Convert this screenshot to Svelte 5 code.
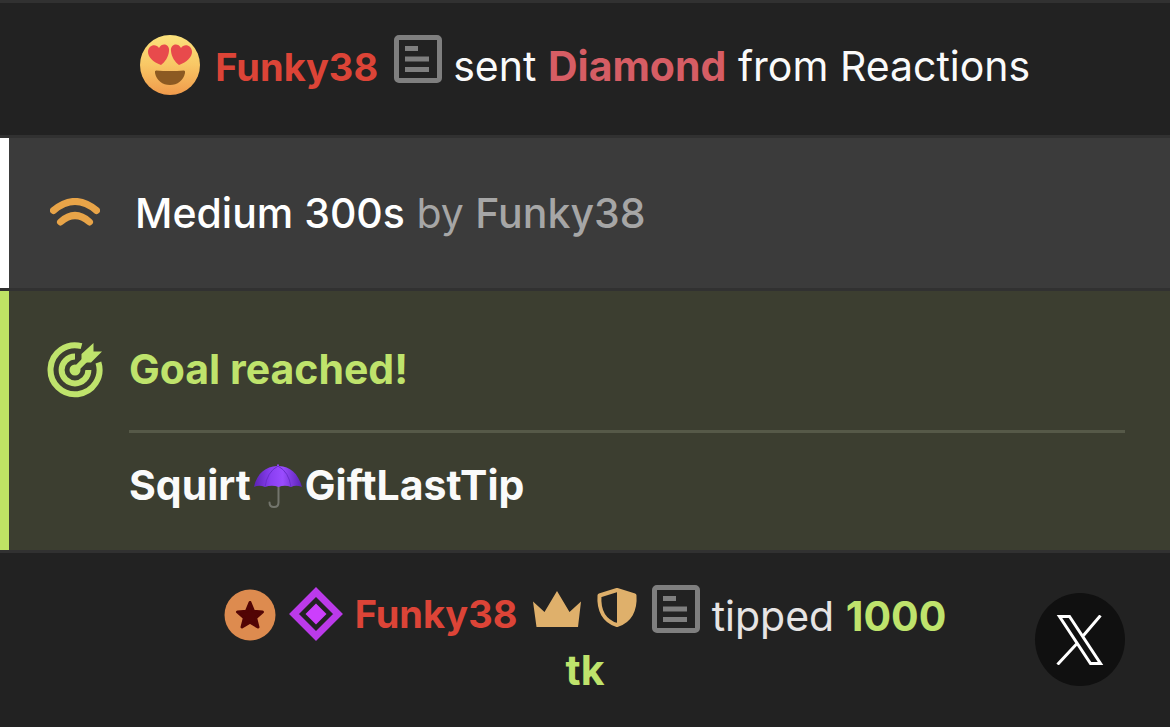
<script>
  const user = 'Funky38';
  const reaction = { name: 'Diamond', source: 'Reactions' };
  const vibe = { level: 'Medium', seconds: 300 };
  const tip = { amount: 1000, unit: 'tk' };
</script>

{#snippet noteIcon()}
  <button class="note-button" aria-label="Note about {user}">
    <svg class="icon" viewBox="0 0 48 48" aria-hidden="true">
      <rect x="2.5" y="2.5" width="43" height="43" rx="2.5" fill="none" stroke="#7f7f7f" stroke-width="5" />
      <path d="M11 11h13v5H11zM11 21.500h24v5H11zM11 32h24v5H11z" fill="#7f7f7f" />
    </svg>
  </button>
{/snippet}

<main class="feed">
  <section class="event reaction">
    <svg class="emoji" viewBox="0 0 60 60" aria-hidden="true">
      <defs>
        <linearGradient id="face" x1="0" y1="0" x2="0" y2="1">
          <stop offset="0" stop-color="#fbe27c" />
          <stop offset="0.5" stop-color="#f8c765" />
          <stop offset="1" stop-color="#f09a4b" />
        </linearGradient>
      </defs>
      <circle cx="30" cy="30" r="30" fill="url(#face)" />
      <path d="M21 30C13 27 8 22 8 17c0-7 8-9 11-4 3-6 11-4 10 3-.5 6-4 11-8 14z" fill="#e84a4c" />
      <path d="M39 30c8-3 13-8 13-13 0-7-8-9-11-4-3-6-11-4-10 3 .5 6 4 11 8 14z" fill="#e84a4c" />
      <path d="M16 35.500Q30 36.500 44 35.500Q45.500 35.500 45 38C43.500 45.500 37.500 50 30 50S16.500 45.500 15 38Q14.500 35.500 16 35.500z" fill="#8c5a22" />
    </svg>
    <span class="user">{user}</span>
    {@render noteIcon()}
    <span class="sent">sent <b>{reaction.name}</b> from {reaction.source}</span>
  </section>

  <section class="event vibe">
    <svg class="wave" viewBox="0 0 50 30" aria-hidden="true">
      <path d="M3.500 12.500Q25 -5.500 46.500 12.500M10.500 24Q25 11 39.500 24" />
    </svg>
    <p>
      <span class="level">{vibe.level} {vibe.seconds}s</span>
      by <span class="by-user">{user}</span>
    </p>
  </section>

  <section class="event goal">
    <svg class="target" viewBox="0 0 56 56" aria-hidden="true">
      <path class="ring" d="M34.500 4.200A24.500 24.500 0 1 0 51.400 20.500" />
      <path class="ring" d="M28 14.600A13.400 13.400 0 1 0 41.400 28" />
      <path class="shaft" d="M28 28L39 17" />
      <circle cx="28" cy="28" r="5.500" />
      <path d="M34.500 18.500V12L46.500 1V9.500H55L44 20.500H37z" />
    </svg>
    <div class="goal-body">
      <h2>Goal reached!</h2>
      <p class="goal-text">
        Squirt<svg class="umbrella" viewBox="0 0 54 48" aria-hidden="true">
          <defs>
            <linearGradient id="canopy" x1="0" y1="0" x2="1" y2="0">
              <stop offset="0" stop-color="#5b23b5" />
              <stop offset="0.35" stop-color="#8a3ff2" />
              <stop offset="0.6" stop-color="#9a4cff" />
              <stop offset="1" stop-color="#5a22b4" />
            </linearGradient>
          </defs>
          <path d="M27.500 20V38.500Q27.500 43 23 43T18.500 38.500" fill="none" stroke="#73756c" stroke-width="2" stroke-linecap="round" />
          <path d="M3 23C6 9 15 2.500 26 2V0.500H28V2C39 2.500 47 9 51 23Q45 20.500 40 23Q34 20.500 27.500 23Q21 20.500 14 23Q8 20.500 3 23z" fill="url(#canopy)" />
          <path d="M27 2Q16 8 14 23M27 2Q38 8 40 23" fill="none" stroke="#6a2ccb" stroke-width="1" />
        </svg>GiftLastTip
      </p>
    </div>
  </section>

  <section class="event tip">
    <svg class="badge star" viewBox="0 0 52 52" aria-hidden="true">
      <circle cx="26" cy="26" r="25.500" fill="#dd8b4f" />
      <path d="M26 13.500L29.600 22.300L38.500 23L31.700 29L34 38L26 33.300L18 38L20.300 29L13.500 23L22.400 22.300z" fill="#520505" stroke="#520505" stroke-width="3" stroke-linejoin="round" />
    </svg>
    <svg class="badge diamond" viewBox="0 0 54 54" aria-hidden="true">
      <path d="M27 5L49 27L27 49L5 27z" fill="none" stroke="#bb3aea" stroke-width="7" />
      <path d="M27 16.500L37.500 27L27 37.500L16.500 27z" fill="#cc3ffc" />
    </svg>
    <span class="user">{user}</span>
    <svg class="icon" viewBox="0 0 48 48" aria-hidden="true">
      <path d="M0 16.500L11.500 27L24 6L36.500 27L48 16.500L45 42H3.500z" fill="#dfb06b" />
    </svg>
    <svg class="icon" viewBox="0 0 48 48" aria-hidden="true">
      <path d="M24 5L41.500 10.500C42.500 25 37 36 24 40C11 36 5.500 25 6.500 10.500z" fill="none" stroke="#dfb06b" stroke-width="4" stroke-linejoin="round" />
      <path d="M24 4L42 10C43 26 37 36 24 41z" fill="#dfb06b" />
    </svg>
    {@render noteIcon()}
    <span class="tipped">tipped <b>{tip.amount}</b> <b>{tip.unit}</b></span>

    <button class="share" aria-label="X">
      <svg viewBox="0 0 48 50" aria-hidden="true">
        <path d="M3.500 1.500H13.500L44.500 48.500H34.500zM44.500 0.500L27 21M21.500 28L1.500 49.500" />
      </svg>
    </button>
  </section>
</main>

<style>
  :global(body) {
    margin: 0;
    background: #222222;
  }

  .feed {
    font-family: Inter, "Liberation Sans", sans-serif;
    font-size: 41px;
    line-height: 54px;
    color: #fafafa;
    background: #222222;
  }

  .event {
    border-top: 3px solid #313131;
  }

  h2,
  p {
    margin: 0;
  }

  .reaction,
  .tip {
    text-align: center;
  }

  .reaction {
    padding: 32px 40px 40px;
  }

  .emoji {
    width: 60px;
    height: 60px;
    margin-right: 4px;
    vertical-align: -14px;
  }

  .user {
    margin-right: 4px;
    font-size: 38px;
    font-weight: 700;
    color: #dc4437;
  }

  .note-button {
    padding: 0;
    border: 0;
    background: none;
    font: inherit;
    cursor: pointer;
  }

  .icon {
    width: 48px;
    height: 48px;
    vertical-align: -2px;
  }

  .sent b {
    color: #d65d64;
  }

  .vibe {
    display: flex;
    align-items: center;
    gap: 35px;
    padding: 48px 50px;
    box-shadow: inset 9px 0 #ffffff;
    background: #3b3b3b;
    color: #a6a6a6;
  }

  .wave {
    width: 50px;
    height: 30px;
    fill: none;
    stroke: #e8a448;
    stroke-width: 7;
    stroke-linecap: round;
  }

  .level {
    font-weight: 500;
    color: #ffffff;
  }

  .by-user {
    font-weight: 500;
  }

  .goal {
    display: flex;
    gap: 26px;
    padding: 51px 45px 38px 47px;
    box-shadow: inset 9px 0 #bfe364;
    background: #3c3e30;
  }

  .target {
    flex: none;
    width: 56px;
    height: 56px;
    fill: #bfe36c;
  }

  .ring,
  .shaft {
    fill: none;
    stroke: #bfe36c;
    stroke-width: 6;
  }

  .goal-body {
    flex: 1;
  }

  h2 {
    padding-bottom: 34px;
    border-bottom: 3px solid #565948;
    font-size: 41px;
    font-weight: 700;
    color: #bfe36c;
  }

  .goal-text {
    padding-top: 25px;
    font-weight: 700;
  }

  .umbrella {
    width: 54px;
    height: 48px;
    vertical-align: -12px;
  }

  .tip {
    position: relative;
    padding: 32px 205px 24px;
  }

  .tip .user {
    vertical-align: 3px;
  }

  .badge {
    width: 52px;
    height: 52px;
    vertical-align: -10px;
  }

  .star {
    margin-right: 2px;
  }

  .diamond {
    width: 54px;
    height: 54px;
  }

  .tipped {
    color: #e6e4e4;
  }

  .tipped b {
    color: #bfe36c;
  }

  .share {
    position: absolute;
    top: 40px;
    right: 45px;
    display: flex;
    align-items: center;
    justify-content: center;
    width: 90px;
    height: 93px;
    padding: 0;
    border: 0;
    border-radius: 50%;
    background: #101010;
    cursor: pointer;
  }

  .share svg {
    width: 48px;
    height: 50px;
    fill: none;
    stroke: #ffffff;
    stroke-width: 3;
  }
</style>
